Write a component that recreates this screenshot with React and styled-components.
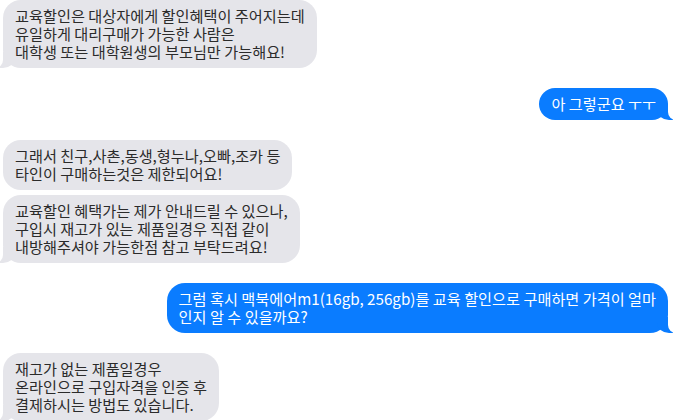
import React from "react";
import styled, { createGlobalStyle, css } from "styled-components";

const Global = createGlobalStyle`
  html, body { margin: 0; padding: 0; background: #ffffff; }
  body { font-family: "Noto Sans CJK KR", "Noto Sans", sans-serif; }
`;

const Thread = styled.div`
  display: flex;
  flex-direction: column;
  width: 696px;
  height: 420px;
  box-sizing: border-box;
  padding: 0 28px 0 3px;
  overflow: hidden;
`;

const Group = styled.div`
  display: flex;
  flex-direction: column;
  align-items: ${(p) => (p.$me ? "flex-end" : "flex-start")};
  gap: 5px;
  margin-bottom: 20px;
`;

const Bubble = styled.div`
  position: relative;
  box-sizing: border-box;
  padding: 6px 12px 8px 12px;
  border-radius: 18px;
  font-size: 15.2px;
  line-height: 18px;
  white-space: nowrap;
  letter-spacing: 0;
  ${(p) =>
    p.$me
      ? css`
          background: #0a7cff;
          color: #ffffff;
        `
      : css`
          background: #e5e5ea;
          color: #2b2b2b;
        `}

  ${(p) =>
    p.$tail &&
    (p.$me
      ? css`
          &::before {
            content: "";
            position: absolute;
            bottom: 0;
            right: -5px;
            width: 16px;
            height: 16px;
            background: #0a7cff;
            border-bottom-left-radius: 12px 10px;
          }
          &::after {
            content: "";
            position: absolute;
            bottom: 0;
            right: -26px;
            width: 26px;
            height: 20px;
            background: #ffffff;
            border-bottom-left-radius: 8px;
          }
        `
      : css`
          &::before {
            content: "";
            position: absolute;
            bottom: 0;
            left: -4px;
            width: 16px;
            height: 16px;
            background: #e5e5ea;
            border-bottom-right-radius: 12px 10px;
          }
          &::after {
            content: "";
            position: absolute;
            bottom: 0;
            left: -26px;
            width: 26px;
            height: 20px;
            background: #ffffff;
            border-bottom-right-radius: 8px;
          }
        `)}
`;

const Text = styled.span`
  position: relative;
  z-index: 1;
`;

const messages = [
  {
    me: false,
    items: [
      [
        "교육할인은 대상자에게 할인혜택이 주어지는데",
        "유일하게 대리구매가 가능한 사람은",
        "대학생 또는 대학원생의 부모님만 가능해요!",
      ],
    ],
  },
  { me: true, items: [["아 그렇군요 ㅜㅜ"]] },
  {
    me: false,
    items: [
      ["그래서 친구,사촌,동생,형누나,오빠,조카 등", "타인이 구매하는것은 제한되어요!"],
      [
        "교육할인 혜택가는 제가 안내드릴 수 있으나,",
        "구입시 재고가 있는 제품일경우 직접 같이",
        "내방해주셔야 가능한점 참고 부탁드려요!",
      ],
    ],
  },
  {
    me: true,
    items: [
      [
        "그럼 혹시 맥북에어m1(16gb, 256gb)를 교육 할인으로 구매하면 가격이 얼마",
        "인지 알 수 있을까요?",
      ],
    ],
  },
  {
    me: false,
    items: [["재고가 없는 제품일경우", "온라인으로 구입자격을 인증 후", "결제하시는 방법도 있습니다."]],
  },
];

export default function App() {
  return (
    <>
      <Global />
      <Thread>
        {messages.map((g, gi) => (
          <Group key={gi} $me={g.me}>
            {g.items.map((lines, i) => (
              <Bubble key={i} $me={g.me} $tail={i === g.items.length - 1}>
                <Text>
                  {lines.map((l, li) => (
                    <React.Fragment key={li}>
                      {li > 0 && <br />}
                      {l}
                    </React.Fragment>
                  ))}
                </Text>
              </Bubble>
            ))}
          </Group>
        ))}
      </Thread>
    </>
  );
}
